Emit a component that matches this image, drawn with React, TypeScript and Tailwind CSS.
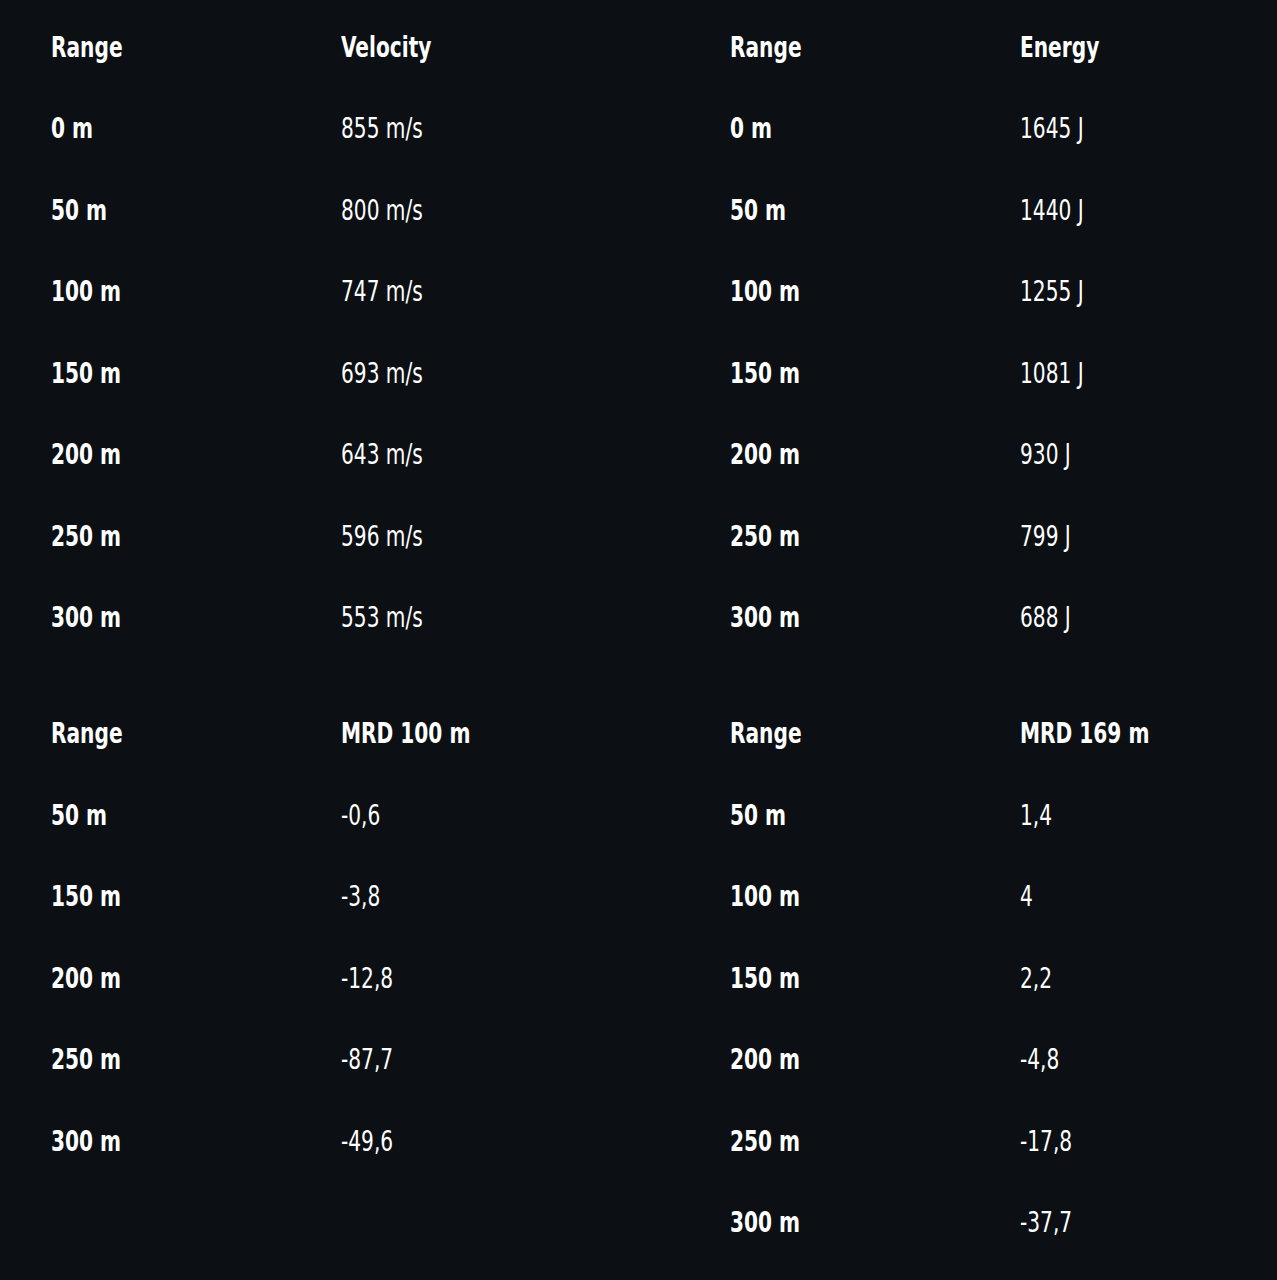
type Row = [string, string];

const tables: { head: Row; rows: Row[] }[] = [
  {
    head: ["Range", "Velocity"],
    rows: [
      ["0 m", "855 m/s"],
      ["50 m", "800 m/s"],
      ["100 m", "747 m/s"],
      ["150 m", "693 m/s"],
      ["200 m", "643 m/s"],
      ["250 m", "596 m/s"],
      ["300 m", "553 m/s"],
    ],
  },
  {
    head: ["Range", "Energy"],
    rows: [
      ["0 m", "1645 J"],
      ["50 m", "1440 J"],
      ["100 m", "1255 J"],
      ["150 m", "1081 J"],
      ["200 m", "930 J"],
      ["250 m", "799 J"],
      ["300 m", "688 J"],
    ],
  },
  {
    head: ["Range", "MRD 100 m"],
    rows: [
      ["50 m", "-0,6"],
      ["150 m", "-3,8"],
      ["200 m", "-12,8"],
      ["250 m", "-87,7"],
      ["300 m", "-49,6"],
    ],
  },
  {
    head: ["Range", "MRD 169 m"],
    rows: [
      ["50 m", "1,4"],
      ["100 m", "4"],
      ["150 m", "2,2"],
      ["200 m", "-4,8"],
      ["250 m", "-17,8"],
      ["300 m", "-37,7"],
    ],
  },
];

// condensed look: squeeze the DejaVu condensed face a bit more
function Cell({ children, bold }: { children: string; bold?: boolean }) {
  return (
    <div>
      <span
        className={
          "inline-block origin-left scale-x-[0.8] whitespace-nowrap " +
          (bold ? "font-bold" : "font-normal")
        }
      >
        {children}
      </span>
    </div>
  );
}

function Table({ head, rows }: { head: Row; rows: Row[] }) {
  return (
    <div className="flex flex-col">
      <div className="grid h-[81.5px] grid-cols-[290px_1fr] items-center">
        <Cell bold>{head[0]}</Cell>
        <Cell bold>{head[1]}</Cell>
      </div>
      {rows.map((r) => (
        <div
          key={r[0]}
          className="grid h-[81.5px] grid-cols-[290px_1fr] items-center"
        >
          <Cell bold>{r[0]}</Cell>
          <Cell>{r[1]}</Cell>
        </div>
      ))}
    </div>
  );
}

export default function App() {
  return (
    <div
      className="min-h-[1280px] w-[1277px] bg-[#0c1014] pl-[51px] pt-[7px] text-[28px] leading-none text-white"
      style={{
        fontFamily:
          '"Liberation Sans Narrow", "DejaVu Sans Condensed", "Liberation Sans", sans-serif',
      }}
    >
      <div className="grid grid-cols-[679px_1fr] gap-y-[34.5px]">
        {tables.map((t, i) => (
          <Table key={i} head={t.head} rows={t.rows} />
        ))}
      </div>
    </div>
  );
}
